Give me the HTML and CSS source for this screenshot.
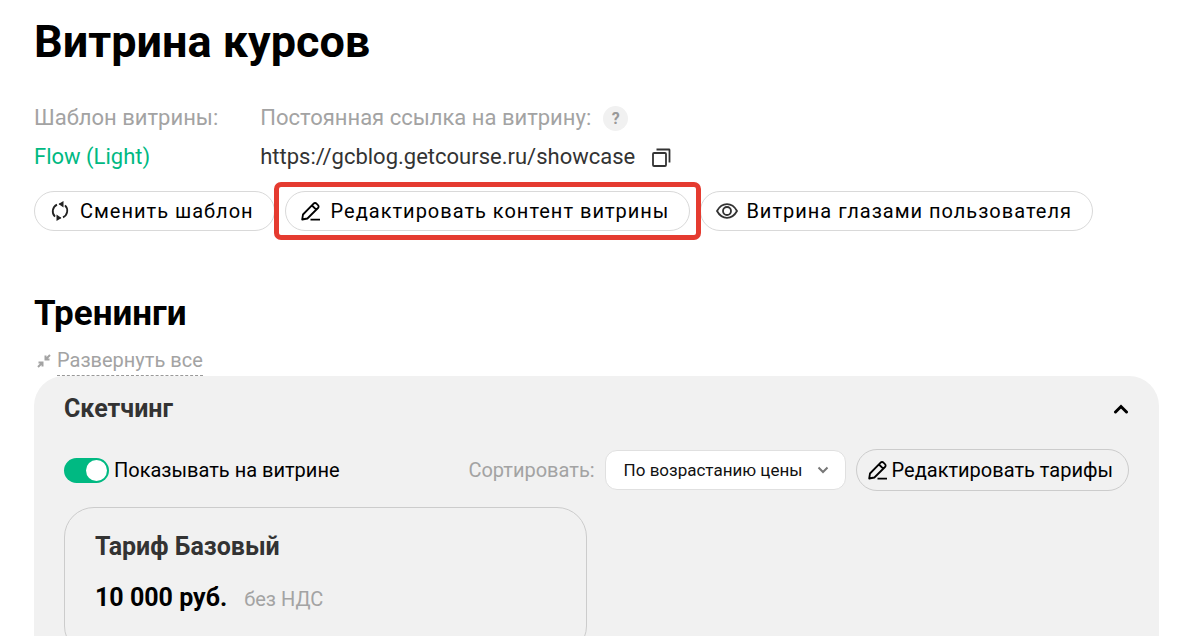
FILE: index.html
```html
<!DOCTYPE html>
<html lang="ru">
<head>
  <meta charset="UTF-8" />
  <meta name="viewport" content="width=device-width, initial-scale=1.0" />
  <title>Витрина курсов</title>
  <link rel="stylesheet" href="styles.css">
</head>

<body>
  <!-- Pencil is used by two buttons -->
  <svg class="sprite" aria-hidden="true">
    <symbol id="pencil" viewBox="0 0 20 20">
      <path d="M1.200 18.500 2 13.500 12.600 2.600a2 2 0 0 1 2.900 0l1.500 1.500a2 2 0 0 1 0 2.900L6.400 17.500zM11 4.500l4.200 4.200M9.500 18.600H19" />
    </symbol>
  </svg>

  <main class="page">
    <h1 class="page-title">Витрина курсов</h1>

    <!-- Showcase info -->
    <div class="info">
      <div class="info-item">
        <p class="info-label">Шаблон витрины:</p>
        <a href="#template" class="template-link">Flow (Light)</a>
      </div>
      <div class="info-item">
        <p class="info-label">Постоянная ссылка на витрину: <button type="button" class="help" aria-label="Подсказка">?</button></p>
        <p class="info-url">https://gcblog.getcourse.ru/showcase
          <button type="button" class="copy" aria-label="Скопировать">
            <svg class="icon" viewBox="0 0 20 20"><rect x="2" y="6" width="13" height="13" rx="1" /><path d="M5.500 2.500H18a.5.5 0 0 1 .5.5v12.500" /></svg>
          </button>
        </p>
      </div>
    </div>

    <!-- Actions -->
    <div class="actions">
      <button type="button" class="btn">
        <svg class="icon refresh" viewBox="0 0 20 20">
          <path d="M7 3.600A7.400 7.400 0 0 0 5 15.600M13 16.400A7.400 7.400 0 0 0 15 4.400M12 3.200H9.500M8 16.800h2.500" />
          <path class="solid" d="m8.500 3 5-3v6.500zM11.500 17l-5 3v-6.500z" />
        </svg>
        Сменить шаблон
      </button>
      <button type="button" class="btn highlighted">
        <svg class="icon"><use href="#pencil" /></svg>
        Редактировать контент витрины
      </button>
      <button type="button" class="btn btn-preview">
        <svg class="icon eye" viewBox="0 0 22 20">
          <path d="M1 10c2.500-4.500 6-6.800 10-6.800s7.500 2.300 10 6.800c-2.500 4.500-6 6.800-10 6.800S3.500 14.500 1 10z" />
          <circle cx="11" cy="10" r="4" />
        </svg>
        Витрина глазами пользователя
      </button>
    </div>

    <!-- Trainings -->
    <h2 class="section-title">Тренинги</h2>
    <button type="button" class="expand-all">
      <svg viewBox="0 0 14 14"><path d="M13 1 9 5M8.500 1.500v4h4M1 13l4-4M1.500 8.500h4v4" /></svg>
      <span>Развернуть все</span>
    </button>

    <section class="training">
      <header class="training-head">
        <h3>Скетчинг</h3>
        <button type="button" class="collapse" aria-label="Свернуть">
          <svg viewBox="0 0 16 10"><path d="m2.500 8 5.500-5.500 5.500 5.500" /></svg>
        </button>
      </header>

      <div class="toolbar">
        <label class="switch">
          <input type="checkbox" checked />
          Показывать на витрине
        </label>
        <label for="sort" class="sort-label">Сортировать:</label>
        <div class="select">
          <select id="sort">
            <option>По возрастанию цены</option>
          </select>
          <svg viewBox="0 0 12 8"><path d="m1.500 1.500 4.500 4.500 4.500-4.500" /></svg>
        </div>
        <button type="button" class="btn btn-tariffs">
          <svg class="icon"><use href="#pencil" /></svg>
          Редактировать тарифы
        </button>
      </div>

      <article class="tariff">
        <h4>Тариф Базовый</h4>
        <p class="price">10 000 руб. <span>без НДС</span></p>
      </article>
    </section>
  </main>
</body>
</html>
```
FILE: styles.css
```css
* {
  box-sizing: border-box;
  margin: 0;
  padding: 0;
}

body {
  font-family: Roboto, sans-serif;
  font-size: 20px;
  line-height: 24px;
  background: #fff;
  color: #000;
}

button,
select {
  font: inherit;
  color: inherit;
  border: none;
  background: none;
  cursor: pointer;
}

svg {
  fill: none;
  stroke: currentColor;
  stroke-width: 2px;
  flex-shrink: 0;
}

.sprite {
  display: none;
}

.icon {
  width: 20px;
  height: 20px;
  stroke-width: 1.8px;
  stroke-linejoin: round;
}

.page {
  padding: 15px 37px 0 34px;
}

.page-title {
  font-size: 45px;
  line-height: 54px;
  font-weight: 700;
}

/* Showcase info */
.info {
  display: flex;
  gap: 42px;
  margin-top: 31px;
  font-size: 22px;
  line-height: 36px;
}

.info-item {
  display: flex;
  flex-direction: column;
  gap: 3px;
}

.info-label,
.info-url {
  display: flex;
  align-items: center;
  gap: 12px;
}

.info-label {
  color: #a3a3a3;
}

.info-url {
  color: #333;
  gap: 16px;
}

.template-link {
  color: #00b982;
  text-decoration: none;
}

.help {
  width: 25px;
  height: 25px;
  border-radius: 50%;
  background: #f1f1f1;
  color: #999;
  font-size: 16px;
  line-height: 25px;
  font-weight: 700;
}

.copy {
  display: flex;
}

/* Actions */
.actions {
  display: flex;
  gap: 10px;
  margin-top: 16px;
}

.btn {
  display: flex;
  align-items: center;
  gap: 10px;
  height: 40px;
  padding: 0 20px 0 15px;
  border: 1px solid #d9d9d9;
  border-radius: 22px;
  letter-spacing: 1px;
  white-space: nowrap;
}

.btn-preview {
  gap: 8px;
}

.highlighted {
  position: relative;
}

.highlighted::after {
  content: "";
  position: absolute;
  inset: -10px -12px;
  border: 5px solid #e53b30;
  border-radius: 7px;
}

.refresh {
  color: #222;
}

.refresh .solid {
  fill: currentColor;
  stroke: none;
}

.eye {
  width: 22px;
  color: #333;
}

/* Trainings */
.section-title {
  margin-top: 61px;
  font-size: 35px;
  line-height: 44px;
  font-weight: 700;
}

.expand-all {
  display: flex;
  align-items: center;
  gap: 6px;
  margin: 10px 0 0 3px;
  color: #a3a3a3;
}

.expand-all span {
  padding: 2px 0 3px;
  border-bottom: 1px dashed #999;
}

.expand-all svg {
  width: 14px;
  height: 14px;
}

.training {
  padding: 17px 30px 30px;
  border-radius: 30px;
  background: #f1f1f1;
}

.training-head {
  display: flex;
  align-items: center;
  justify-content: space-between;
}

.training-head h3,
.tariff h4 {
  color: #333;
  font-size: 25px;
  line-height: 32px;
  font-weight: 700;
}

.collapse svg {
  display: block;
  width: 16px;
  height: 10px;
  stroke-width: 3px;
  stroke-linecap: round;
}

.toolbar {
  display: flex;
  align-items: center;
  gap: 10px;
  margin-top: 24px;
}

.switch {
  display: flex;
  align-items: center;
  gap: 5px;
  margin-right: auto;
}

.switch input {
  appearance: none;
  width: 45px;
  height: 25px;
  padding: 2px;
  border-radius: 13px;
  background: #00b982;
  cursor: pointer;
}

.switch input::before {
  content: "";
  display: block;
  width: 21px;
  height: 21px;
  margin-left: auto;
  border-radius: 50%;
  background: #fff;
}

.switch input:not(:checked) {
  background: #ccc;
}

.switch input:not(:checked)::before {
  margin-left: 0;
}

.sort-label {
  color: #a3a3a3;
}

.select {
  display: grid;
  align-items: center;
}

.select select,
.select svg {
  grid-area: 1 / 1;
}

.select select {
  appearance: none;
  height: 40px;
  padding: 0 42px 0 18px;
  border: 1px solid #e0e0e0;
  border-radius: 12px;
  background: #fff;
  color: #111;
  font-size: 17px;
}

.select svg {
  justify-self: end;
  width: 12px;
  height: 8px;
  margin-right: 17px;
  color: #777;
  pointer-events: none;
}

.btn-tariffs {
  gap: 4px;
  height: 42px;
  padding: 0 15px 0 11px;
  border-color: #ccc;
  letter-spacing: normal;
}

.tariff {
  max-width: 523px;
  margin-top: 16px;
  padding: 23px 30px 40px;
  border: 1px solid #ccc;
  border-radius: 30px;
}

.price {
  display: flex;
  align-items: baseline;
  gap: 17px;
  margin-top: 19px;
  font-size: 25px;
  line-height: 32px;
  font-weight: 700;
}

.price span {
  color: #a3a3a3;
  font-size: 20px;
  font-weight: 400;
}
```
